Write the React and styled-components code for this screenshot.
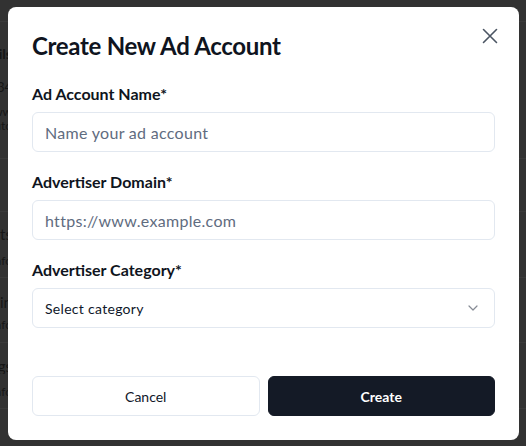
import React from 'react';
import styled, { createGlobalStyle } from 'styled-components';

const GlobalStyle = createGlobalStyle`
  html, body {
    margin: 0;
    padding: 0;
    background: #323232;
  }
  body {
    font-family: Lato, "Noto Sans", sans-serif;
    -webkit-font-smoothing: antialiased;
  }
  * { box-sizing: border-box; }
`;

const Page = styled.div`
  width: 526px;
  height: 446px;
  overflow: hidden;
  background: #323232;
  display: flex;
  flex-direction: column;
  padding-top: 21px;
`;

const BgRow = styled.div`
  height: ${props => props.h}px;
  border-top: 1px solid #3a3a3a;
  display: flex;
  flex-direction: column;
`;

const BgText = styled.div`
  width: 12px;
  height: 16px;
  margin-top: ${props => props.mt}px;
  overflow: hidden;
  display: flex;
  justify-content: flex-end;
  white-space: nowrap;
  color: #161616;
  font-size: ${props => props.size || 13}px;
  font-weight: ${props => (props.bold ? 700 : 400)};
  line-height: 16px;
`;

const Overlay = styled.div`
  position: fixed;
  inset: 0;
  display: flex;
  align-items: flex-start;
  justify-content: flex-start;
  padding: 7px 0 0 8px;
`;

const Modal = styled.div`
  position: relative;
  width: 511px;
  height: 433px;
  background: #ffffff;
  border-radius: 8px;
  padding: 24px 24px;
  display: flex;
  flex-direction: column;
`;

const Title = styled.h2`
  margin: 0;
  font-size: 24px;
  line-height: 28px;
  font-weight: 700;
  color: #0f1420;
  letter-spacing: -0.3px;
  padding-top: 1px;
`;

const CloseButton = styled.button`
  position: absolute;
  top: 15px;
  right: 15px;
  width: 28px;
  height: 28px;
  border: none;
  background: transparent;
  padding: 0;
  display: flex;
  align-items: center;
  justify-content: center;
  color: #4b5563;
  cursor: pointer;
`;

const Form = styled.div`
  display: flex;
  flex-direction: column;
  gap: 20px;
  margin-top: 24px;
`;

const Field = styled.div`
  display: flex;
  flex-direction: column;
  gap: 8px;
`;

const Label = styled.label`
  font-size: 16px;
  line-height: 20px;
  font-weight: 700;
  color: #0f1420;
`;

const Input = styled.input`
  height: 40px;
  width: 100%;
  border: 1px solid #e2e8f0;
  border-radius: 6px;
  padding: 0 12px;
  font-family: inherit;
  font-size: 16px;
  letter-spacing: 0.3px;
  color: #0f172a;
  outline: none;
  &::placeholder {
    color: #5f6c80;
  }
`;

const Select = styled.div`
  height: 40px;
  border: 1px solid #e2e8f0;
  border-radius: 6px;
  padding: 0 16px 0 12px;
  display: flex;
  align-items: center;
  justify-content: space-between;
  font-size: 14px;
  letter-spacing: 0.3px;
  color: #0f172a;
`;

const Footer = styled.div`
  margin-top: auto;
  display: grid;
  grid-template-columns: 1fr 1fr;
  gap: 8px;
`;

const Button = styled.button`
  height: 40px;
  border-radius: 6px;
  font-family: inherit;
  font-size: 14px;
  font-weight: ${props => (props.primary ? 700 : 400)};
  border: 1px solid ${props => (props.primary ? '#141a26' : '#e2e8f0')};
  background: ${props => (props.primary ? '#141a26' : '#ffffff')};
  color: ${props => (props.primary ? '#ffffff' : '#0f172a')};
  cursor: pointer;
`;

const bgRows = [
  { h: 145, items: [{ t: 'Details', bold: true, size: 14, mt: 24 }, { t: '1234', size: 13, mt: 17 }, { t: 'www', size: 12, mt: 9 }, { t: 'auto', size: 12, mt: -2 }] },
  { h: 56, items: [] },
  { h: 70, items: [{ t: 'Reports', size: 15, mt: 14 }, { t: 'Info', size: 12, mt: 11 }] },
  { h: 68, items: [{ t: 'Domain', size: 15, mt: 16 }, { t: 'Info', size: 12, mt: 7 }] },
  { h: 70, items: [{ t: 'Settings', size: 15, mt: 15 }, { t: 'Info', size: 12, mt: 10 }] },
  { h: 40, items: [] },
];

export default function App() {
  return (
    <>
      <GlobalStyle />
      <Page>
        {bgRows.map((row, i) => (
          <BgRow key={i} h={row.h}>
            {row.items.map((it, j) => (
              <BgText key={j} bold={it.bold} size={it.size} mt={it.mt}>{it.t}</BgText>
            ))}
          </BgRow>
        ))}
      </Page>
      <Overlay>
        <Modal>
          <Title>Create New Ad Account</Title>
          <CloseButton aria-label="Close">
            <svg width="16" height="16" viewBox="0 0 16 16" fill="none" stroke="currentColor" strokeWidth="1.6" strokeLinecap="round">
              <path d="M1.5 1.5 L14.5 14.5 M14.5 1.5 L1.5 14.5" />
            </svg>
          </CloseButton>
          <Form>
            <Field>
              <Label>Ad Account Name*</Label>
              <Input placeholder="Name your ad account" />
            </Field>
            <Field>
              <Label>Advertiser Domain*</Label>
              <Input placeholder="https://www.example.com" />
            </Field>
            <Field>
              <Label>Advertiser Category*</Label>
              <Select>
                <span>Select category</span>
                <svg width="10" height="6" viewBox="0 0 10 6" fill="none" stroke="#868b95" strokeWidth="1.2" strokeLinecap="round" strokeLinejoin="round">
                  <path d="M1 1 L5 5 L9 1" />
                </svg>
              </Select>
            </Field>
          </Form>
          <Footer>
            <Button>Cancel</Button>
            <Button primary>Create</Button>
          </Footer>
        </Modal>
      </Overlay>
    </>
  );
}
